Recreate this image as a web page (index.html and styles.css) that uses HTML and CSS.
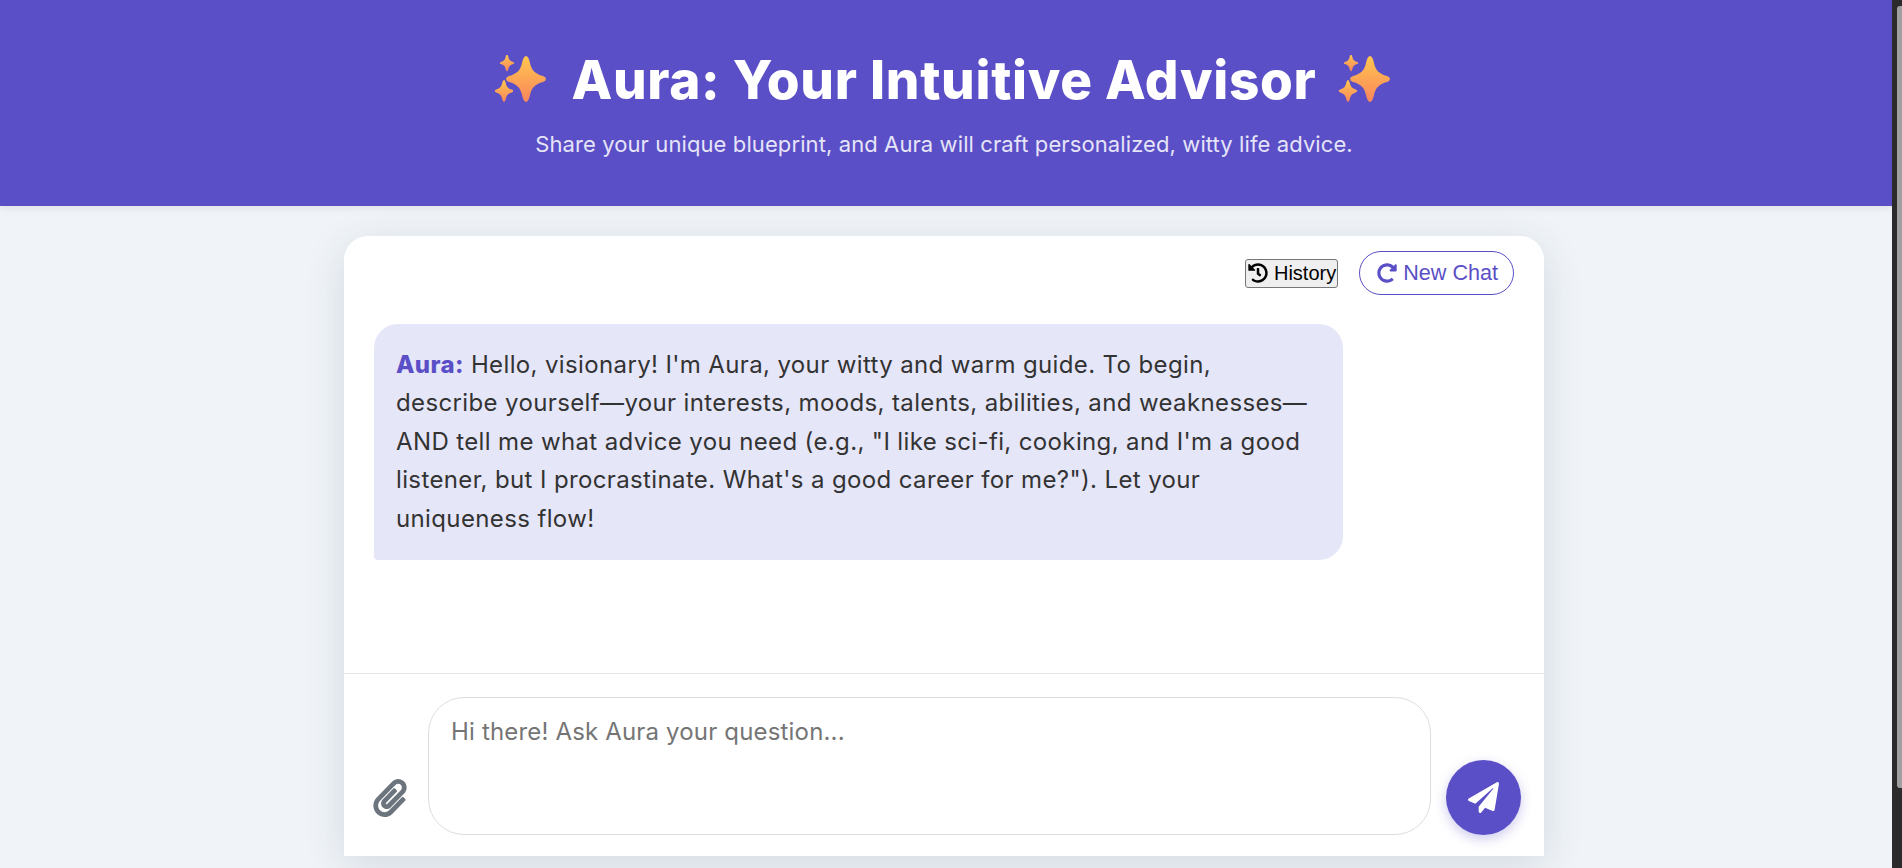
FILE: index.html
```html
<!DOCTYPE html>
<html lang="en">
<head>
    <meta charset="UTF-8">
    <title>Aura: Your Intuitive Advisor</title>
    <link rel="stylesheet" href="styles.css">
</head>
<body>
    <div class="page">
        <header class="hero">
            <h1>
                <svg class="sparkle" viewBox="0 0 60 50">
                    <defs>
                        <linearGradient id="spark" x1="0" y1="0" x2="0" y2="1">
                            <stop offset="0" stop-color="#ffc64f"/>
                            <stop offset="1" stop-color="#fa855c"/>
                        </linearGradient>
                        <path id="star" d="M0-23Q2.5-23 4-16C5.5-9 9-5 17-3Q20-2 20 0Q20 2 17 3C9 5 5.5 9 4 16Q2.5 23 0 23Q-2.5 23-4 16C-5.5 9-9 5-17 3Q-20 2-20 0Q-20-2-17-3C-9-5-5.5-9-4-16Q-2.5-23 0-23Z"/>
                    </defs>
                    <use href="#star" fill="url(#spark)" transform="translate(34 24)"/>
                    <use href="#star" fill="url(#spark)" transform="translate(15 8) scale(.36)"/>
                    <use href="#star" fill="url(#spark)" transform="translate(12 36) scale(.46 .48)"/>
                </svg>
                <span>Aura: Your Intuitive Advisor</span>
                <svg class="sparkle" viewBox="0 0 60 50">
                    <use href="#star" fill="url(#spark)" transform="translate(34 24)"/>
                    <use href="#star" fill="url(#spark)" transform="translate(15 8) scale(.36)"/>
                    <use href="#star" fill="url(#spark)" transform="translate(12 36) scale(.46 .48)"/>
                </svg>
            </h1>
            <p>Share your unique blueprint, and Aura will craft personalized, witty life advice.</p>
        </header>

        <main class="chat-card">
            <div class="toolbar">
                <button class="history-btn">
                    <svg class="icon" viewBox="0 0 512 512"><path d="M504 255.531c.253 136.64-111.18 248.372-247.82 248.468-59.015.042-113.223-20.53-155.822-54.911-11.077-8.94-11.905-25.541-1.839-35.607l11.267-11.267c8.609-8.609 22.353-9.551 31.891-1.984C173.062 425.135 212.781 440 256 440c101.705 0 184-82.311 184-184 0-101.705-82.311-184-184-184-48.814 0-93.149 18.969-126.068 49.932l50.754 50.754c10.08 10.08 2.941 27.314-11.313 27.314H24c-8.837 0-16-7.163-16-16V38.627c0-14.254 17.234-21.393 27.314-11.314l49.372 49.372C129.209 34.136 189.552 8 256 8c136.81 0 247.747 110.78 248 247.531zm-180.912 78.784l9.823-12.63c8.138-10.463 6.253-25.542-4.21-33.679L288 256.349V152c0-13.255-10.745-24-24-24h-16c-13.255 0-24 10.745-24 24v135.651l65.409 50.874c10.463 8.137 25.541 6.253 33.679-4.21z"/></svg>
                    History
                </button>
                <button class="new-chat-btn">
                    <svg class="icon" viewBox="0 0 512 512"><path d="M256.455 8c66.269.119 126.437 26.233 170.859 68.685l35.715-35.715C478.149 25.851 504 36.559 504 57.941V192c0 13.255-10.745 24-24 24H345.941c-21.382 0-32.09-25.851-16.971-40.971l41.75-41.75c-30.864-28.899-70.801-44.907-113.23-45.273-92.398-.798-170.283 73.977-169.484 169.442C88.764 348.009 162.184 424 256 424c41.127 0 79.997-14.678 110.63-41.556 4.743-4.161 11.906-3.908 16.368.553l39.662 39.662c4.872 4.872 4.631 12.815-.482 17.433C378.202 479.813 319.926 504 256 504 119.034 504 8.001 392.967 8 256.002 7.999 119.193 119.646 7.755 256.455 8z"/></svg>
                    New Chat
                </button>
            </div>

            <div class="messages">
                <div class="bubble">
                    <strong>Aura:</strong> Hello, visionary! I'm Aura, your witty and warm guide. To begin,<br>
                    describe yourself—your interests, moods, talents, abilities, and weaknesses—<br>
                    AND tell me what advice you need (e.g., "I like sci-fi, cooking, and I'm a good<br>
                    listener, but I procrastinate. What's a good career for me?"). Let your<br>
                    uniqueness flow!
                </div>
            </div>

            <div class="composer">
                <button class="attach-btn">
                    <svg viewBox="0 0 448 512"><path d="M43.246 466.142c-58.43-60.289-57.341-157.511 1.386-217.581L254.392 34c44.316-45.332 116.351-45.336 160.671 0 43.89 44.894 43.943 117.329 0 162.276L232.214 383.128c-29.855 30.537-78.633 30.111-107.982-.998-28.275-29.97-27.368-77.473 1.452-106.953l143.743-146.835c6.182-6.314 16.312-6.422 22.626-.241l22.861 22.379c6.315 6.182 6.422 16.312.241 22.626L171.427 319.927c-4.932 5.045-5.236 13.428-.648 18.292 4.372 4.634 11.245 4.711 15.688.165l182.849-186.851c19.613-20.062 19.613-52.725-.011-72.798-19.189-19.627-49.957-19.637-69.154 0L90.39 293.295c-34.763 35.56-35.299 93.12-1.191 128.313 34.01 35.093 88.985 35.137 123.058.286l172.06-175.999c6.177-6.319 16.307-6.433 22.626-.256l22.877 22.364c6.319 6.177 6.434 16.307.256 22.626l-172.06 175.998c-59.576 60.938-155.943 60.216-214.77-.485z"/></svg>
                </button>
                <textarea class="question" placeholder="Hi there! Ask Aura your question..."></textarea>
                <button class="send-btn">
                    <svg viewBox="0 0 512 512"><path d="M476 3.2L12.5 270.6c-18.1 10.4-15.8 35.6 2.2 43.2L121 358.4l287.3-253.2c5.5-4.9 13.3 2.6 8.6 8.3L176 407v80.5c0 23.6 28.5 32.9 42.5 15.8L282 426l124.6 52.2c14.2 6 30.4-2.9 33-18.2l72-432C515 7.8 493.3-6.8 476 3.2z"/></svg>
                </button>
            </div>
        </main>
    </div>
    <div class="scrollbar"><div class="scrollbar-thumb"></div></div>
</body>
</html>
```

FILE: styles.css
```css
* { box-sizing: border-box; }
html, body { height: 100%; margin: 0; overflow: hidden; }
body { display: flex; font-family: Inter, "Noto Sans", sans-serif; background: #f0f4f8; color: #333; }

.page { flex: 1; min-width: 0; }
.scrollbar { width: 10px; background: #2b2b2b; padding: 6px 0 80px 5px; }
.scrollbar-thumb { height: 100%; background: #a0a0a0; border-radius: 3px 0 0 3px; }

.hero { height: 206px; padding: 46px 4px 0 0; background: #5a4fc6; color: #fff; text-align: center; box-shadow: 0 2px 8px rgba(0,0,0,0.08); }
.hero h1 { display: flex; justify-content: center; align-items: center; gap: 19px; height: 68px; margin: 0; font-size: 53px; font-weight: 800; letter-spacing: 0.7px; }
.hero p { margin: 17px 0 0; font-size: 22px; letter-spacing: 0.1px; color: #e6e4f8; }
.sparkle { width: 60px; height: 50px; }

.chat-card { width: 1200px; height: 620px; margin: 30px auto 0; transform: translateX(-2px); background: #fff; border-radius: 24px 24px 0 0; box-shadow: 0 10px 40px rgba(40,60,90,0.14); display: flex; flex-direction: column; }

.toolbar { display: flex; justify-content: flex-end; align-items: center; gap: 21px; height: 44px; margin: 15px 30px 0 0; }
.icon { width: 20px; height: 20px; fill: currentColor; vertical-align: -3px; }
.history-btn { height: 29px; padding: 0 1px 0 2px; background: #efefef; border: 1px solid #767676; border-radius: 3px; color: #000; font: 20px "Liberation Sans", Arial, sans-serif; }
.new-chat-btn { height: 44px; padding: 0 15px 0 17px; background: #fff; border: 1px solid #5a4fc6; border-radius: 22px; color: #5a4fc6; font: 21.6px "Liberation Sans", Arial, sans-serif; }

.messages { flex: 1; padding: 29px 30px 0; }
.bubble { width: 969px; padding: 22px; background: #e6e6f9; border-radius: 24px 24px 24px 4px; font-size: 24px; line-height: 38.4px; letter-spacing: 0.37px; white-space: nowrap; }
.bubble strong { color: #5a4fc6; font-weight: 800; }

.composer { height: 183px; border-top: 1px solid #e6e8ec; display: flex; align-items: flex-end; padding: 0 23px 21px 29px; }
.attach-btn { width: 55px; height: 40px; margin-bottom: 16px; padding: 0; background: none; border: 0; text-align: left; }
.attach-btn svg { width: 34px; height: 38px; fill: #6c757d; }
.question { width: 1003px; height: 138px; margin: 0 15px 0 0; padding: 17px 22px; border: 1px solid #ddd; border-radius: 36px; font: 24px/1.4 Inter, "Noto Sans", sans-serif; letter-spacing: 0.17px; color: #333; resize: none; outline: none; background: #fff; }
.question::placeholder { color: #757575; }
.send-btn { width: 75px; height: 75px; padding: 0; background: #5a4fc6; border: 0; border-radius: 50%; box-shadow: 0 4px 12px rgba(90,79,198,0.3); display: flex; align-items: center; justify-content: center; }
.send-btn svg { width: 31px; height: 31px; fill: #fff; }
```
